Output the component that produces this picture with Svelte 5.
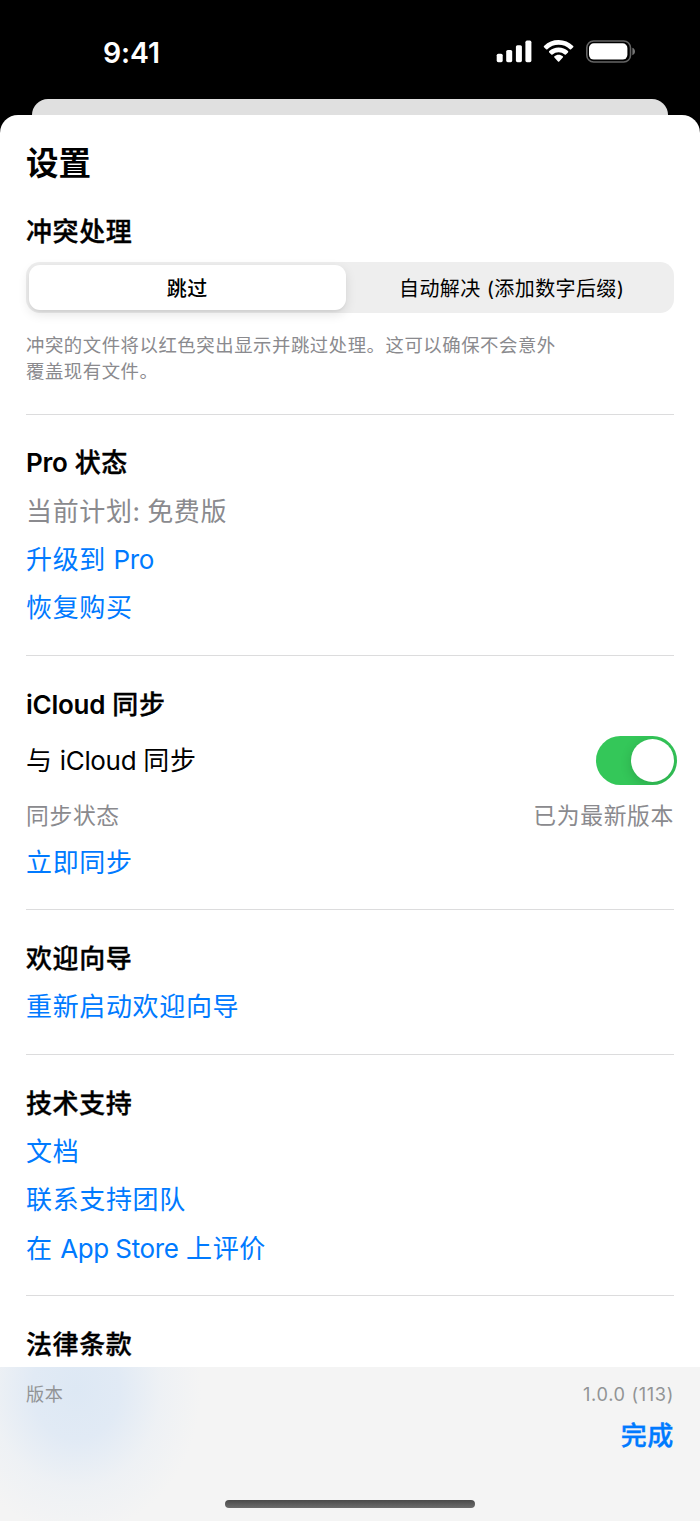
<script>
  let conflictMode = $state('skip')  // 'skip' | 'auto'
  let syncOn = $state(true)

  const modes = [
    { id: 'skip', label: '跳过' },
    { id: 'auto', label: '自动解决 (添加数字后缀)' },
  ]
</script>

<div class="screen">
  <!-- Status bar -->
  <header class="status-bar">
    <span class="time">9:41</span>
    <svg class="status-icons" width="140" height="26" viewBox="496 38 140 26">
      <g fill="#fff">
        <rect x="496.7" y="53.7" width="6" height="8.5" rx="1.6" />
        <rect x="506.2" y="50" width="6" height="12.2" rx="1.6" />
        <rect x="515.9" y="45.2" width="6" height="17" rx="1.6" />
        <rect x="525.4" y="40.6" width="6" height="21.6" rx="1.6" />
        <path d="M558.6 40.1c5.6 0 10.7 2.2 14.6 5.8.4.4.4.9 0 1.3l-2.1 2.1c-.4.4-.9.4-1.3 0a16.3 16.3 0 0 0-22.4 0c-.4.4-.9.4-1.3 0l-2.1-2.1c-.4-.4-.4-.9 0-1.3a21.4 21.4 0 0 1 14.6-5.8z" />
        <path d="M558.6 47.5c3.6 0 6.9 1.4 9.4 3.6.4.4.4.9 0 1.3l-2.1 2.1c-.4.4-.8.4-1.2 0a9.2 9.2 0 0 0-12.2 0c-.4.4-.8.4-1.2 0l-2.1-2.1c-.4-.4-.4-.9 0-1.3a14 14 0 0 1 9.4-3.6z" />
        <path d="M558.6 54.8c1.6 0 3.1.6 4.2 1.5.4.4.4.9 0 1.3l-3.6 3.8c-.4.4-.8.4-1.2 0l-3.6-3.8c-.4-.4-.4-.9 0-1.3 1.1-.9 2.6-1.5 4.2-1.5z" />
        <rect x="589" y="43.3" width="38.4" height="16.3" rx="4.8" />
      </g>
      <rect x="586.8" y="41" width="43.7" height="21" rx="6.8" fill="none" stroke="#646464" stroke-width="1.6" />
      <path d="M632.4 47.8c1.6.6 2.6 2 2.6 3.7s-1 3.1-2.6 3.7z" fill="#757575" />
    </svg>
  </header>

  <div class="back-sheet"></div>

  <div class="sheet">
    <main>
      <h1>设置</h1>

      <section class="conflicts">
        <h2>冲突处理</h2>
        <div class="segmented">
          {#each modes as mode (mode.id)}
            <button class:active={conflictMode === mode.id} onclick={() => conflictMode = mode.id}>
              {mode.label}
            </button>
          {/each}
        </div>
        <p class="hint">冲突的文件将以红色突出显示并跳过处理。这可以确保不会意外<br />覆盖现有文件。</p>
      </section>

      <section>
        <h2><span class="en">Pro</span> 状态</h2>
        <p class="muted">当前计划<span class="en">:</span> 免费版</p>
        <button class="link">升级到 <span class="en">Pro</span></button>
        <button class="link">恢复购买</button>
      </section>

      <section>
        <h2><span class="en">iCloud</span> 同步</h2>
        <div class="row toggle-row">
          <span>与 <span class="en">iCloud</span> 同步</span>
          <button
            class="toggle"
            class:on={syncOn}
            role="switch"
            aria-checked={syncOn}
            aria-label="与 iCloud 同步"
            onclick={() => syncOn = !syncOn}
          >
            <span class="knob"></span>
          </button>
        </div>
        <div class="row sync-status">
          <span>同步状态</span>
          <span>已为最新版本</span>
        </div>
        <button class="link">立即同步</button>
      </section>

      <section>
        <h2>欢迎向导</h2>
        <button class="link">重新启动欢迎向导</button>
      </section>

      <section>
        <h2>技术支持</h2>
        <button class="link">文档</button>
        <button class="link">联系支持团队</button>
        <button class="link">在 <span class="en">App Store</span> 上评价</button>
      </section>

      <section>
        <h2>法律条款</h2>
      </section>
    </main>

    <footer>
      <div class="row version">
        <span>版本</span>
        <span>1.0.0 (113)</span>
      </div>
      <button class="link done">完成</button>
      <div class="home-indicator"></div>
    </footer>
  </div>
</div>

<style>
  :global(body) { background: #000; }

  .screen {
    display: flex;
    flex-direction: column;
    width: 700px;
    height: 1521px;
    overflow: hidden;
    background: #000;
    color: #000;
    font-family: Inter, "Noto Sans CJK SC", sans-serif;
    font-size: 26px;
    letter-spacing: 0.65px;
  }

  h1, h2, p { margin: 0; }

  button {
    border: none;
    padding: 0;
    background: none;
    color: inherit;
    font: inherit;
    letter-spacing: inherit;
    cursor: pointer;
  }

  .status-bar {
    display: flex;
    justify-content: space-between;
    align-items: flex-start;
    height: 99px;
    padding: 38px 64px 0 103px;
    box-sizing: border-box;
    color: #fff;
  }
  .time { font-size: 28.4px; font-weight: 600; line-height: 29px; letter-spacing: -0.1px; }
  .status-icons { flex-shrink: 0; }

  .back-sheet {
    flex-shrink: 0;
    height: 16px;
    margin: 0 32px;
    border-radius: 16px 16px 0 0;
    background: #e0e0e0;
  }

  .sheet {
    flex: 1;
    min-height: 0;
    display: flex;
    flex-direction: column;
    border-radius: 18px 18px 0 0;
    background: #fff;
    overflow: hidden;
  }

  main { flex: 1; min-height: 0; padding: 28px 26px 0; overflow: hidden; }

  /* Latin runs are set tighter than the Chinese around them */
  .en { letter-spacing: -0.35px; }

  h1 { padding-top: 2px; font-size: 32.5px; font-weight: 700; line-height: 38px; letter-spacing: 0; }
  h2 { font-size: 26px; font-weight: 500; letter-spacing: 0.6px; -webkit-text-stroke: 0.35px #000; }
  h2 .en { font-weight: 600; letter-spacing: -0.25px; -webkit-text-stroke: 0; }

  h2, .muted, .link { padding-top: 2px; line-height: 30px; word-spacing: -0.5px; }

  section {
    display: flex;
    flex-direction: column;
    align-items: stretch;
    gap: 16.35px;
    padding: 31.7px 0 31.5px;
    border-bottom: 1px solid #dcdcdd;
    line-height: 32px;
  }
  section:last-child { border-bottom: none; }

  .conflicts { gap: 15.5px; padding-bottom: 30px; }

  .segmented {
    display: grid;
    grid-template-columns: 316.5px 1fr;
    gap: 5px;
    height: 50.5px;
    padding: 3px 1px 3px 3px;
    box-sizing: border-box;
    border-radius: 14px;
    background: #eee;
    font-size: 20px;
    letter-spacing: 0.4px;
  }
  .segmented button { padding-top: 3px; border-radius: 11px; }
  .segmented .active {
    background: #fff;
    font-weight: 500;
    box-shadow: 0 4px 12px rgba(0, 0, 0, 0.11), 0 2px 2px rgba(0, 0, 0, 0.04);
  }

  .hint {
    margin-top: 4px;
    padding-top: 1px;
    margin-bottom: -1px;
    color: #8a8a8e;
    font-size: 18.4px;
    line-height: 25.7px;
    letter-spacing: 0.53px;
  }
  .muted { color: #8a8a8e; }
  .link { color: #007aff; text-align: left; }

  .row { display: flex; justify-content: space-between; align-items: center; }
  .toggle-row > span { padding-top: 2px; word-spacing: -0.8px; }
  .sync-status { padding-top: 1px; color: #8a8a8e; font-size: 22.8px; line-height: 27px; height: 27.3px; }

  .toggle {
    display: flex;
    align-items: center;
    width: 81px;
    height: 49px;
    margin-right: -3px;
    padding: 3px;
    box-sizing: border-box;
    border-radius: 25px;
    background: #e9e9ea;
    overflow: hidden;
  }
  .toggle.on { justify-content: flex-end; background: #34c759; }
  .knob {
    width: 43px;
    height: 43px;
    border-radius: 50%;
    background: #fff;
    box-shadow: 0 3px 12px rgba(0, 0, 0, 0.16);
  }

  footer {
    flex-shrink: 0;
    display: flex;
    flex-direction: column;
    height: 154px;
    padding: 14px 26px 13px;
    box-sizing: border-box;
    background:
      radial-gradient(ellipse 125px 145px at 76px 22px, #dde8f4 0%, rgba(223, 233, 245, 0.9) 35%, rgba(232, 238, 245, 0.5) 68%, rgba(244, 244, 244, 0) 100%),
      #f4f4f4;
  }
  .version { color: #929496; font-size: 18.2px; line-height: 26px; }
  .done { align-self: flex-end; margin-top: 12px; font-weight: 500; -webkit-text-stroke: 0.35px #007aff; }
  .home-indicator {
    width: 250px;
    height: 8px;
    margin: auto auto 0;
    border-radius: 4px;
    background: linear-gradient(#4a4a4a, #6c6c6c);
  }
</style>
